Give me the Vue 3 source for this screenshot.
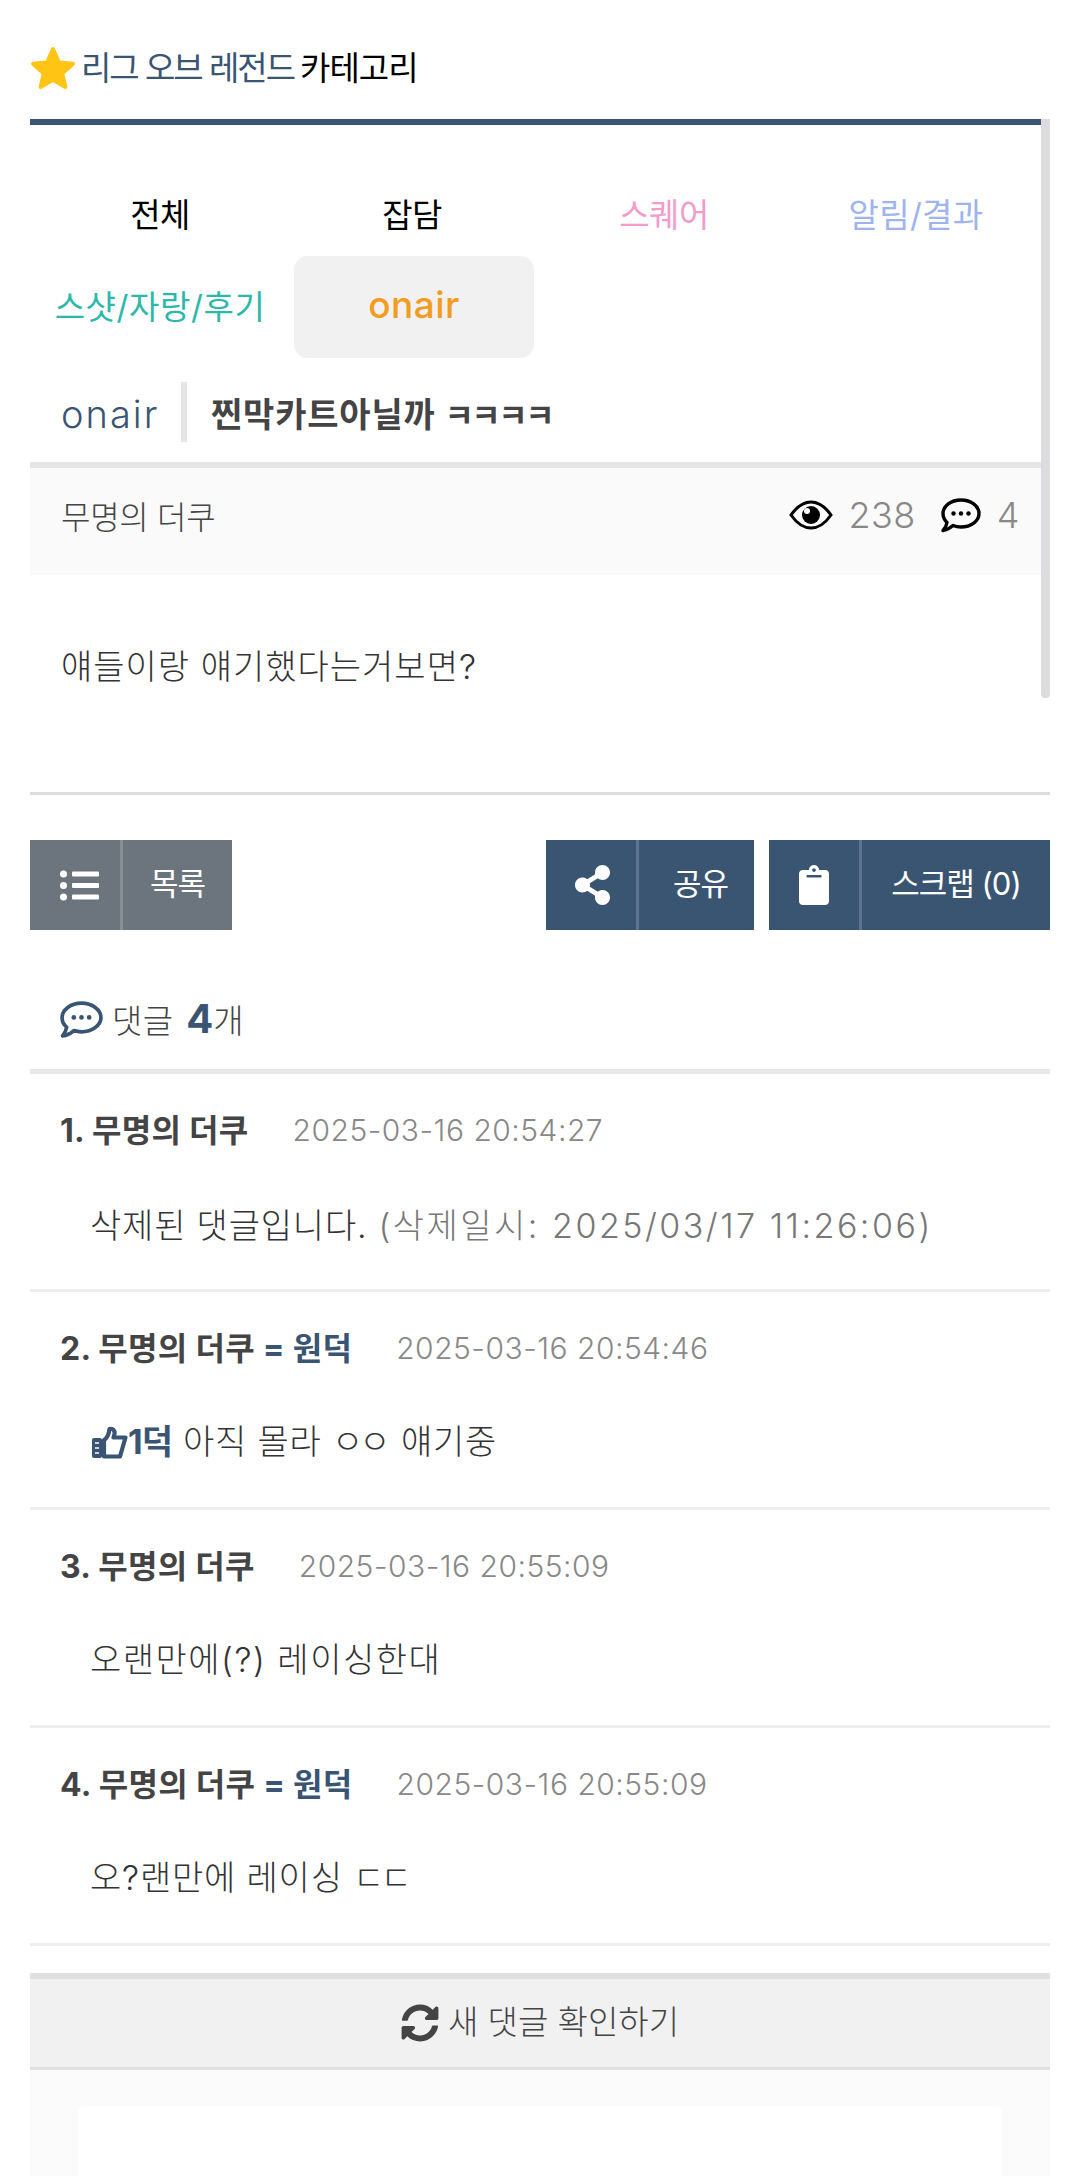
<script setup>
const tabs = [
  { label: '전체', cls: 'black' },
  { label: '잡담', cls: 'black' },
  { label: '스퀘어', cls: 'pink' },
  { label: '알림/결과', cls: 'peri' },
  { label: '스샷/자랑/후기', cls: 'teal' },
  { label: 'onair', cls: 'active' },
]
const comments = [
  { n: 1, op: false, date: '2025-03-16 20:54:27', kind: 'deleted', pre: '삭제된 댓글입니다.', note: '(삭제일시: 2025/03/17 11:26:06)' },
  { n: 2, op: true, date: '2025-03-16 20:54:46', kind: 'liked', pre: '아직 몰라 ', jamo: 'ㅇㅇ', post: ' 얘기중' },
  { n: 3, op: false, date: '2025-03-16 20:55:09', kind: 'wide', pre: '오랜만에(?) 레이싱한대' },
  { n: 4, op: true, date: '2025-03-16 20:55:09', kind: 'plain', pre: '오?랜만에 레이싱 ', jamo: 'ㄷㄷ' },
]
</script>

<template>
  <div class="page">
    <h1 class="heading">
      <svg class="star" viewBox="0 0 46 44"><path d="M23 3 L28.8 16.4 L43 17.8 L32.2 27.4 L35.4 41 L23 33.8 L10.6 41 L13.8 27.4 L3 17.8 L17.2 16.4 Z" fill="#ffc414" stroke="#ffc414" stroke-width="4" stroke-linejoin="round"/></svg>
      <span class="blue">리그 오브 레전드</span><span class="cat">카테고리</span>
    </h1>

    <div class="scrollwrap">
      <div class="post">
        <div class="tabs">
          <div v-for="t in tabs" :key="t.label" class="tab" :class="t.cls"><span>{{ t.label }}</span></div>
        </div>
        <div class="titlerow">
          <span class="board">onair</span>
          <span class="sep"></span>
          <span class="subject">찐막카트아닐까 <span class="jamo">ㅋㅋㅋㅋ</span></span>
        </div>
        <div class="meta">
          <span class="author">무명의 더쿠</span>
          <div class="stats">
            <svg class="eye" viewBox="0 0 44 30"><path d="M2 15 C9 5 15 2 22 2 C29 2 35 5 42 15 C35 25 29 28 22 28 C15 28 9 25 2 15 Z" fill="none" stroke="#000" stroke-width="3"/><circle cx="22" cy="15" r="9" fill="#000"/><circle cx="18" cy="11" r="3" fill="#fff"/></svg>
            <span class="num">238</span>
            <svg class="bubble" viewBox="0 0 42 36"><path d="M21 3 C31 3 39 9 39 16.500 C39 24 31 30 21 30 C18 30 15.500 29.500 13 28.500 C10 31 7 33 3 33.500 C5 31.500 6.500 28.500 7 25.500 C4.500 23 3 20 3 16.500 C3 9 11 3 21 3 Z" fill="none" stroke="#000" stroke-width="3.400" stroke-linejoin="round"/><circle cx="13.500" cy="16.500" r="2.200"/><circle cx="21" cy="16.500" r="2.200"/><circle cx="28.500" cy="16.500" r="2.200"/></svg>
            <span class="num">4</span>
          </div>
        </div>
        <div class="body">얘들이랑 얘기했다는거보면?</div>
      </div>
      <div class="thumb"></div>
    </div>

    <div class="actions">
      <a class="btn gray list">
        <span class="ico">
          <svg class="listicon" viewBox="0 0 39 31" fill="#fff"><circle cx="3.500" cy="4" r="3.500"/><circle cx="3.500" cy="15.500" r="3.500"/><circle cx="3.500" cy="27" r="3.500"/><rect x="12" y="1.500" width="27" height="5" rx="1"/><rect x="12" y="13" width="27" height="5" rx="1"/><rect x="12" y="24.500" width="27" height="5" rx="1"/></svg>
        </span>
        <span class="lab">목록</span>
      </a>
      <span class="grow"></span>
      <a class="btn blue-bg share">
        <span class="ico">
          <svg class="shareicon" viewBox="0 0 448 512" fill="#fff"><path d="M352 320c-22.608 0-43.387 7.819-59.790 20.895l-102.486-64.054a96.551 96.551 0 0 0 0-41.683l102.486-64.054C308.613 184.181 329.392 192 352 192c53.019 0 96-42.981 96-96S405.019 0 352 0s-96 42.981-96 96c0 7.158.79 14.130 2.276 20.841L155.790 180.895C139.387 167.819 118.608 160 96 160c-53.019 0-96 42.981-96 96s42.981 96 96 96c22.608 0 43.387-7.819 59.790-20.895l102.486 64.054A96.301 96.301 0 0 0 256 416c0 53.019 42.981 96 96 96s96-42.981 96-96-42.981-96-96-96z"/></svg>
        </span>
        <span class="lab shift">공유</span>
      </a>
      <a class="btn blue-bg scrap">
        <span class="ico">
          <svg class="clipicon" viewBox="0 0 384 512" fill="#fff"><path d="M384 112v352c0 26.510-21.490 48-48 48H48c-26.510 0-48-21.490-48-48V112c0-26.510 21.490-48 48-48h80c0-35.290 28.710-64 64-64s64 28.710 64 64h80c26.510 0 48 21.490 48 48zM192 40c-13.255 0-24 10.745-24 24s10.745 24 24 24 24-10.745 24-24-10.745-24-24-24m96 114v-20a6 6 0 0 0-6-6H102a6 6 0 0 0-6 6v20a6 6 0 0 0 6 6h180a6 6 0 0 0 6-6z"/></svg>
        </span>
        <span class="lab">스크랩 (0)</span>
      </a>
    </div>

    <div class="chead">
      <svg class="cbubble" viewBox="0 0 42 36"><path d="M21 2 C31.500 2 40 8.500 40 16 C40 23.500 31.500 30 21 30 C18.500 30 16 29.600 13.500 28.800 C10.500 31.500 7 33.500 2.500 34 C4.500 31.500 6 28.500 6.500 25.500 C3.500 23 2 19.500 2 16 C2 8.500 10.500 2 21 2 Z" fill="none" stroke="#3a5573" stroke-width="3.600" stroke-linejoin="round"/><circle cx="13.500" cy="16" r="2.300" fill="#3a5573"/><circle cx="21" cy="16" r="2.300" fill="#3a5573"/><circle cx="28.500" cy="16" r="2.300" fill="#3a5573"/></svg>
      <span>댓글 <b class="count">4</b>개</span>
    </div>

    <div v-for="c in comments" :key="c.n" class="comment">
      <div class="chead-row">
        <span class="cname">{{ c.n }}. 무명의 더쿠<span v-if="c.op" class="op"> = 원덕</span></span>
        <span class="cdate">{{ c.date }}</span>
      </div>
      <div class="ctext" :class="c.kind">
        <template v-if="c.kind === 'liked'"><svg class="thumbup" viewBox="0 0 36 33"><rect x="0" y="12" width="10" height="20" rx="2" fill="#3a5573"/><path d="M3 17H7M3 22H7M3 27H7" stroke="#fff" stroke-width="1.500"/><path d="M12 14 C15.500 12 17 7 17.500 3 C21 2 23 4.500 22.500 8 L21.500 11.500 H33.500 L28 30.500 H12 Z" fill="none" stroke="#3a5573" stroke-width="4.200" stroke-linejoin="round"/></svg><b class="like">1덕</b></template>{{ c.pre }}<span v-if="c.jamo" class="tight">{{ c.jamo }}</span>{{ c.post }}<span v-if="c.note" class="note">{{ c.note }}</span>
      </div>
    </div>

    <div class="refresh">
      <svg class="sync" viewBox="0 0 512 512" fill="#444"><path d="M370.720 133.280C339.458 104.008 298.888 87.962 255.848 88c-77.458.068-144.328 53.178-162.791 126.850-1.344 5.363-6.122 9.150-11.651 9.150H24.103c-7.498 0-13.194-6.807-11.807-14.176C33.933 94.924 134.813 8 256 8c66.448 0 126.791 26.136 171.315 68.685L463.030 40.970C478.149 25.851 504 36.559 504 57.941V192c0 13.255-10.745 24-24 24H345.941c-21.382 0-32.090-25.851-16.971-40.971l41.750-41.749zM32 296h134.059c21.382 0 32.090 25.851 16.971 40.971l-41.750 41.750c31.262 29.273 71.835 45.319 114.876 45.280 77.418-.07 144.315-53.144 162.787-126.849 1.344-5.363 6.122-9.150 11.651-9.150h57.304c7.498 0 13.194 6.807 11.807 14.176C478.067 417.076 377.187 504 256 504c-66.448 0-126.791-26.136-171.315-68.685L48.970 471.030C33.851 486.149 8 475.441 8 454.059V320c0-13.255 10.745-24 24-24z"/></svg>
      <span class="refresh-text">새 댓글 확인하기</span>
    </div>

    <div class="footer"><div class="inner"></div></div>
  </div>
</template>

<style>
html, body { margin: 0; background: #fff; }
</style>

<style scoped>
.page {
  width: 1020px;
  height: 2176px;
  overflow: hidden;
  padding: 0 30px;
  font-family: Inter, "Noto Sans CJK KR", sans-serif;
  font-weight: 300;
  color: #333;
}
.heading {
  margin: 0;
  padding: 48px 0 31px;
  height: 40px;
  display: flex;
  align-items: center;
  font-size: 33px;
  font-weight: 400;
  line-height: 40px;
  letter-spacing: -2px;
  white-space: pre;
}
.star { width: 46px; height: 44px; margin-right: 5px; }
.blue { color: #3a5573; }
.cat { color: #000; margin-left: 6px; letter-spacing: -1px; }

.scrollwrap { position: relative; padding-right: 9px; }
.post { border-top: 6px solid #3a5573; }
.thumb {
  position: absolute;
  top: 0;
  right: 0;
  width: 9px;
  height: 579px;
  background: #dcdcdf;
  border-radius: 0 0 4px 4px;
}
.tabs {
  display: grid;
  grid-template-columns: repeat(4, 252px);
  grid-template-rows: 82px 102px;
  padding: 49px 0 0 4px;
  font-size: 33px;
  font-weight: 400;
  letter-spacing: -.5px;
}
.tab { display: flex; align-items: center; justify-content: center; padding-bottom: 5px; box-sizing: border-box; }
.black { color: #000; }
.pink { color: #f29ccb; }
.peri { color: #9db4ee; letter-spacing: .3px; }
.teal { color: #2eb8ac; letter-spacing: .6px; }
.active {
  background: #f1f1f1;
  border-radius: 14px;
  color: #f39c1f;
  font-weight: 500;
  margin: 0 4px 0 8px;
  letter-spacing: .5px;
  font-size: 37px;
}
.titlerow {
  display: flex;
  align-items: center;
  padding: 24px 0 20px 31px;
  border-bottom: 6px solid #e5e5e5;
  height: 60px;
}
.board { color: #3a5573; font-size: 38px; width: 120px; letter-spacing: 2px; padding-top: 4px; }
.sep { width: 6px; height: 60px; background: #e5e5e5; }
.subject { margin-left: 24px; font-size: 34px; font-weight: 700; color: #444; letter-spacing: .8px; }
.jamo { font-size: 32px; letter-spacing: -2.500px; }
.meta {
  height: 107px;
  padding: 0 31px 14px;
  box-sizing: border-box;
  background: #fafafa;
  display: flex;
  align-items: center;
  justify-content: space-between;
}
.author { font-size: 32px; color: #444; letter-spacing: -.3px; }
.stats { display: flex; align-items: center; color: #888; font-size: 36px; margin-right: -10px; }
.eye { width: 44px; height: 30px; }
.bubble { width: 42px; height: 36px; margin: 0 15px 0 24px; }
.num { margin-left: 15px; letter-spacing: .5px; }
.bubble + .num { margin-left: 0; }
.body {
  height: 217px;
  box-sizing: border-box;
  padding: 72px 31px 0;
  line-height: 40px;
  font-size: 34px;
  color: #333;
  letter-spacing: 1px;
}
.actions {
  display: flex;
  border-top: 3px solid #ddd;
  padding-top: 45px;
  color: #fff;
  font-size: 31px;
}
.grow { flex: 1; }
.btn { display: flex; height: 90px; align-items: center; }
.gray { background: #6c757d; }
.blue-bg { background: #3a5572; }
.list { width: 202px; }
.share { width: 208px; margin-right: 15px; }
.scrap { width: 281px; }
.ico {
  width: 90px;
  height: 90px;
  flex: none;
  display: flex;
  align-items: center;
  justify-content: center;
  border-right: 3px solid #5c7491;
}
.gray .ico { border-right-color: #868e96; }
.lab { flex: 1; text-align: center; font-weight: 400; letter-spacing: -1px; padding-bottom: 7px; }
.shift { padding-left: 8px; }
.listicon { width: 39px; height: 31px; margin-left: 9px; }
.shareicon { width: 35px; height: 40px; margin-left: 2px; }
.clipicon { width: 30px; height: 40px; }

.chead {
  padding: 69px 0 30px 30px;
  height: 40px;
  display: flex;
  align-items: center;
  border-bottom: 5px solid #e8e8e8;
  font-size: 33px;
  color: #444;
  letter-spacing: .4px;
}
.cbubble { width: 43px; height: 37px; margin-right: 9px; }
.count { color: #3a5573; font-weight: 700; font-size: 40px; letter-spacing: 0; margin-left: 3px; line-height: 30px; }
.comment {
  height: 218px;
  box-sizing: border-box;
  padding: 34px 0 0 30px;
  border-bottom: 3px solid #eee;
}
.chead-row { display: flex; align-items: center; height: 40px; }
.cname { font-size: 32px; font-weight: 700; color: #444; letter-spacing: .3px; white-space: pre; }
.op { color: #3a5573; }
.cdate { margin-left: 44px; font-size: 30px; color: #888; letter-spacing: .5px; position: relative; top: 2px; }
.ctext {
  margin-top: 56px;
  padding-left: 30px;
  line-height: 40px;
  height: 40px;
  font-size: 34px;
  color: #333;
  letter-spacing: .8px;
  white-space: pre-wrap;
}
.ctext.deleted { margin-top: 58px; }
.ctext.wide { letter-spacing: 1.500px; }
.note { color: #777; letter-spacing: 2.500px; margin-left: 11px; }
.tight { letter-spacing: -4px; margin-right: 4px; }
.thumbup { width: 36px; height: 33px; vertical-align: -5px; margin-left: 2px; }
.like { color: #3a5573; font-weight: 700; letter-spacing: -1px; margin-right: 11px; }
.refresh {
  margin-top: 27px;
  height: 88px;
  border-top: 6px solid #e0e0e0;
  border-bottom: 3px solid #e0e0e0;
  background: #f1f1f1;
  display: flex;
  align-items: center;
  justify-content: center;
  font-size: 33px;
  color: #444;
}
.refresh-text { padding-bottom: 6px; }
.sync { width: 38px; height: 38px; margin-right: 9px; }
.footer {
  background: #fbfbfb;
  padding: 36px 48px 0;
  height: 106px;
  box-sizing: border-box;
}
.inner { background: #fff; height: 70px; border-radius: 6px 6px 0 0; }
</style>
